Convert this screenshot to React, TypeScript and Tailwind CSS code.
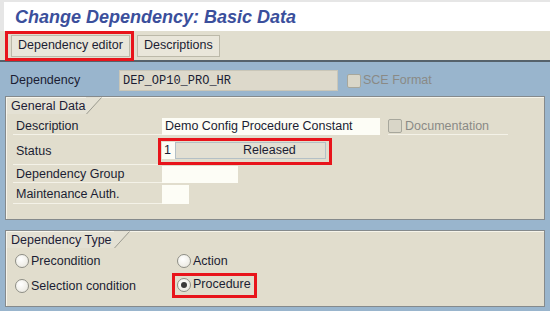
import React from 'react';

function Tab({ label, width }: { label: string; width: number }) {
  return (
    <div className="flex h-[17px] items-stretch">
      <div
        className="flex items-center whitespace-nowrap border-l border-t border-[#f7f5ec] bg-[#e4e1d4] pl-[4px] text-[12.5px] text-[#1d2036]"
        style={{ width }}
      >
        {label}
      </div>
      <svg width="16" height="17" viewBox="0 0 16 17" className="block">
        <polygon points="0,0 15,0 0,17" fill="#e4e1d4" />
        <line x1="15.5" y1="0.5" x2="0.5" y2="17" stroke="#9c9c92" strokeWidth="1" />
      </svg>
    </div>
  );
}

function Checkbox() {
  return <div className="h-[14px] w-[14px] rounded-[2px] border border-[#a7a79c] bg-[#d9d6c8]" />;
}

function Radio({ checked }: { checked?: boolean }) {
  return (
    <div className="flex h-[14px] w-[14px] items-center justify-center rounded-full border border-[#8e8e86] bg-[radial-gradient(circle_at_40%_35%,#ffffff,#e6e4da)]">
      {checked && <div className="h-[6px] w-[6px] rounded-full bg-[#3a3a3a]" />}
    </div>
  );
}

function Label({ children }: { children: React.ReactNode }) {
  return (
    <div className="flex h-full w-[149px] items-center border-b border-[#f4f2e8] pl-[3px]">{children}</div>
  );
}

export default function App() {
  return (
    <div className="h-[311px] w-[550px] overflow-hidden bg-[#99b5cd] font-['Liberation_Sans',Arial,sans-serif] text-[12.5px] text-[#1b1d33]">
      {/* Title */}
      <div className="flex h-[31px] items-center border-l-4 border-t-2 border-[#e6e6e6] bg-white pl-[11px]">
        <h1 className="text-[18px] font-bold italic leading-none text-[#3b4f9c]">Change Dependency: Basic Data</h1>
      </div>

      {/* Toolbar */}
      <div className="flex h-[31px] items-center gap-[3px] border-b-2 border-[#56626b] bg-[#e1decf] pl-[5px]">
        <div className="flex h-[30px] items-center border-[3px] border-[#e8141b] pl-[3px] pr-[1px]">
          <button className="h-[22px] border border-[#bcb9a9] bg-[#e9e6da] px-[6px] text-[12.5px] text-[#1b1d33]">
            Dependency editor
          </button>
        </div>
        <button className="h-[22px] border border-[#bcb9a9] bg-[#e9e6da] px-[6px] text-[12.5px] text-[#1b1d33]">
          Descriptions
        </button>
      </div>

      {/* Dependency row */}
      <div className="mt-[8px] flex h-[21px] items-center">
        <div className="w-[119px] pl-[10px]">Dependency</div>
        <div className="flex h-full w-[219px] items-center border border-[#c9c6b8] bg-[#ddd9cb] pl-[3px] font-['Liberation_Mono',monospace] text-[12px]">
          DEP_OP10_PRO_HR
        </div>
        <div className="ml-[9px] flex items-center gap-[2px] text-[#8a8a86]">
          <Checkbox />
          <span>SCE Format</span>
        </div>
      </div>

      {/* General Data */}
      <div className="mx-[5px] mt-[5px] h-[124px] border border-[#858a8c] bg-[#e1ddcd] shadow-[inset_1px_1px_0_#f6f4ea]">
        <Tab label="General Data" width={80} />
        <div className="pl-[7px] pt-[4px]">
          <div className="flex h-[17px] items-center">
            <Label>Description</Label>
            <div className="flex h-full w-[218px] items-center bg-[#fdfdf6] pl-[3px]">Demo Config Procedure Constant</div>
            <div className="ml-[8px] flex h-full w-[120px] items-center gap-[3px] border-b border-[#f4f2e8] text-[#8a8a86]">
              <Checkbox />
              <span>Documentation</span>
            </div>
          </div>
          <div className="mt-[3px] flex h-[27px] items-center">
            <Label>Status</Label>
            <div className="-ml-[4px] flex h-[27px] w-[174px] items-start border-[3px] border-[#e8141b] pl-[1px] pt-[1px]">
              <div className="flex h-[17px] w-[13px] items-center bg-[#fdfdf6] pl-[2px]">1</div>
              <div className="flex h-[17px] w-[151px] items-center border border-[#b4c0c6] bg-[#e2dfd2] pl-[67px]">
                Released
              </div>
            </div>
          </div>
          <div className="mt-[1px] flex h-[17px] items-center">
            <Label>Dependency Group</Label>
            <div className="h-full w-[76px] bg-[#fdfdf6]" />
          </div>
          <div className="mt-[2px] flex h-[19px] items-center">
            <Label>Maintenance Auth.</Label>
            <div className="h-full w-[27px] bg-[#fdfdf6]" />
          </div>
        </div>
      </div>

      {/* Dependency Type */}
      <div className="mx-[5px] mt-[10px] h-[77px] border border-[#858a8c] bg-[#e1ddcd] shadow-[inset_1px_1px_0_#f6f4ea]">
        <Tab label="Dependency Type" width={108} />
        <div className="pl-[9px] pt-[4px]">
          <div className="flex h-[18px] items-center">
            <div className="flex w-[162px] items-center gap-[2px]">
              <Radio />
              <span>Precondition</span>
            </div>
            <div className="flex items-center gap-[2px]">
              <Radio />
              <span>Action</span>
            </div>
          </div>
          <div className="mt-[3px] flex h-[25px] items-start">
            <div className="mt-[4px] flex w-[157px] items-center gap-[2px]">
              <Radio />
              <span>Selection condition</span>
            </div>
            <div className="flex h-[25px] w-[85px] items-center gap-[2px] border-[3px] border-[#e8141b] pb-[2px] pl-[2px]">
              <Radio checked />
              <span>Procedure</span>
            </div>
          </div>
        </div>
      </div>
    </div>
  );
}
